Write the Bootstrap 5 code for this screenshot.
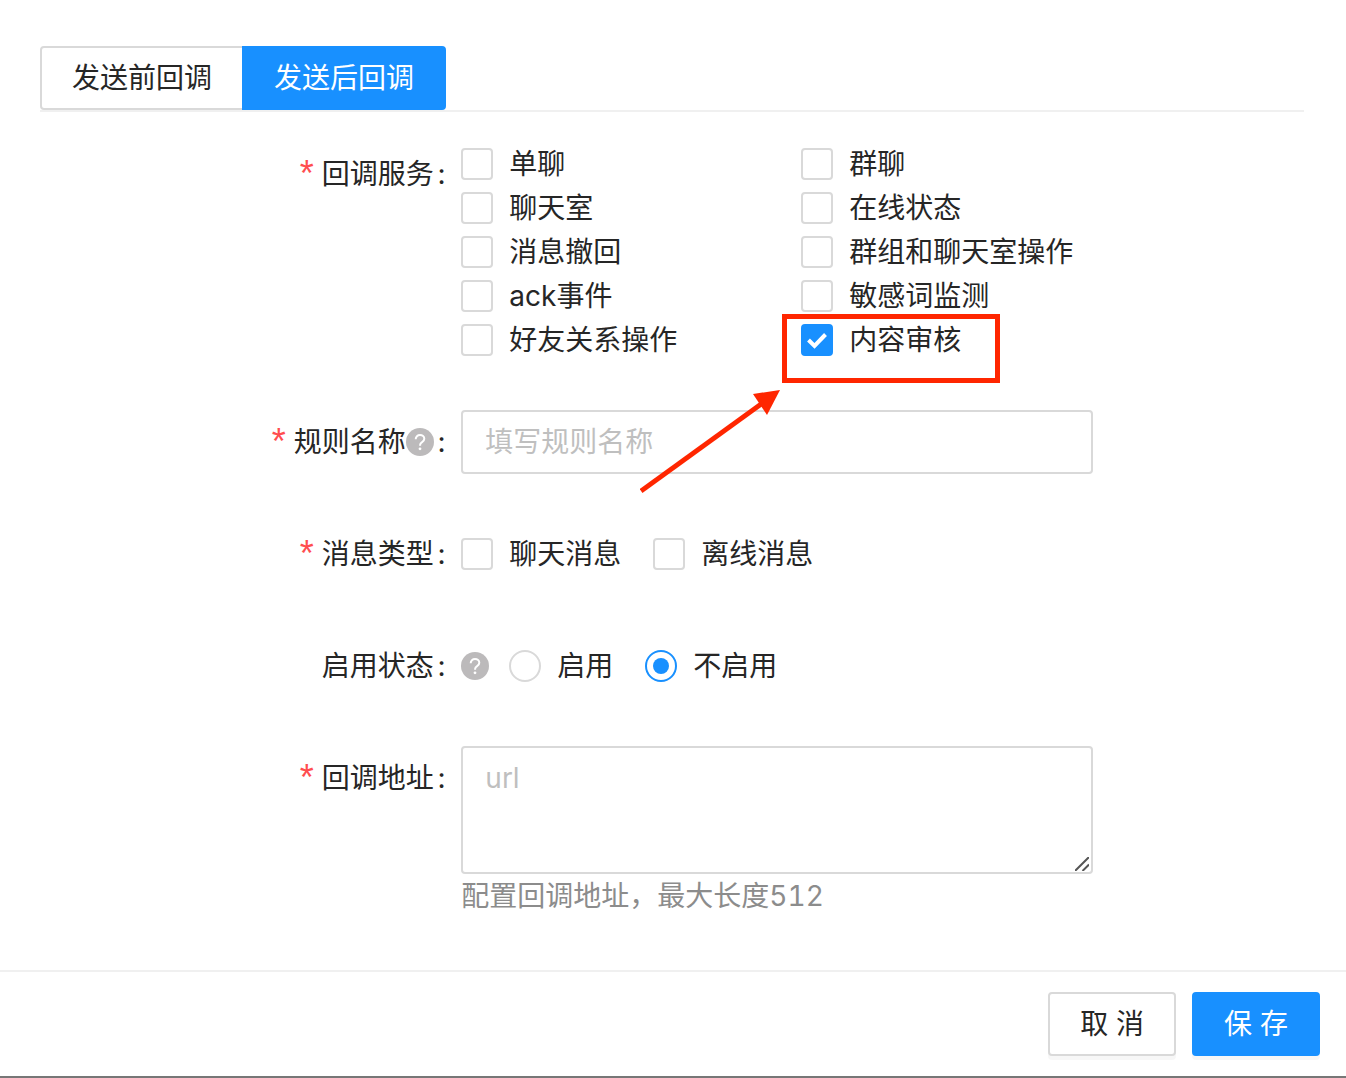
<!DOCTYPE html>
<html lang="zh-CN">
<head>
<meta charset="utf-8">
<meta name="viewport" content="width=device-width, initial-scale=1">
<title>回调配置</title>
<link href="https://cdn.jsdelivr.net/npm/bootstrap@5.3.0/dist/css/bootstrap.min.css" rel="stylesheet">
<style>
  :root { --line: #d9d9d9; --ink: #262626; --brand: #1890ff; }
  body {
    font-family: Inter, "Noto Sans CJK SC", sans-serif;
    font-size: 28px; line-height: 44px; color: var(--ink); background: #fff;
    font-variant-numeric: tabular-nums;
  }
  .dialog-main { padding: 46px 42px 52px 40px; }
  .ui-btn {
    --bs-btn-font-size: 28px; --bs-btn-line-height: 44px;
    --bs-btn-padding-x: 30px; --bs-btn-padding-y: 8px;
    --bs-btn-border-width: 2px; --bs-btn-border-radius: 4px;
    --bs-btn-color: var(--ink); --bs-btn-bg: #fff; --bs-btn-border-color: var(--line);
    --bs-btn-hover-color: var(--brand); --bs-btn-hover-bg: #fff; --bs-btn-hover-border-color: var(--brand);
  }
  .ui-btn-main {
    --bs-btn-color: #fff; --bs-btn-bg: var(--brand); --bs-btn-border-color: var(--brand);
    --bs-btn-hover-color: #fff; --bs-btn-hover-bg: #40a9ff; --bs-btn-hover-border-color: #40a9ff;
  }
  .tab-strip { border-bottom: 2px solid #f0f0f0; margin-bottom: 30px; }
  .tab-strip .ui-btn + .ui-btn { margin-left: -2px; }
  .field + .field { margin-top: 48px; }
  .field-label { padding: 10px 0; }
  .field-label .star {
    color: #ff4d4f; width: 14px; margin-right: 8px; text-align: center;
    font-family: "Liberation Sans", sans-serif; font-size: 36px;
  }
  .field-label .colon { margin: 0 16px 0 4px; }
  .help { width: 28px; height: 28px; flex: none; }
  .options { display: grid; grid-template-columns: 340px 1fr; }
  .field-line { min-height: 64px; }
  .form-check-input {
    width: 32px; height: 32px; margin: 0; flex: none;
    border: 2px solid var(--line); background-color: #fff;
  }
  .form-check-input[type=checkbox] { border-radius: 4px; }
  .form-check-input:checked { border-color: var(--brand); }
  .form-check-input:checked[type=checkbox] {
    background-color: var(--brand); background-origin: border-box; background-size: 32px 32px;
    background-image: url("data:image/svg+xml,%3Csvg xmlns='http://www.w3.org/2000/svg' viewBox='0 0 32 32'%3E%3Cpath d='M7.5 16l6 6L24.5 10.500' fill='none' stroke='%23fff' stroke-width='4'/%3E%3C/svg%3E");
  }
  .form-check-input:checked[type=radio] {
    background-color: #fff; background-origin: border-box; background-size: 32px 32px;
    background-image: url("data:image/svg+xml,%3Csvg xmlns='http://www.w3.org/2000/svg' viewBox='0 0 32 32'%3E%3Ccircle cx='16' cy='16' r='8' fill='%231890ff'/%3E%3C/svg%3E");
  }
  .form-control {
    font-size: 28px; line-height: 44px; padding: 8px 22px; color: var(--ink);
    border: 2px solid var(--line); border-radius: 4px;
  }
  .form-control::placeholder { color: #bfbfbf; }
  textarea.form-control { height: 128px; display: block; }
  textarea.form-control::-webkit-resizer { display: none; }
  .grip { right: 4px; bottom: 3px; width: 14px; height: 14px; pointer-events: none; }
  .hint { color: #8c8c8c; }
  .callout-mark { left: -161px; top: -4px; width: 360px; height: 180px; pointer-events: none; z-index: 2; }
  .dialog-foot { border-top: 2px solid #f0f0f0; border-bottom: 2px solid #777; padding: 20px 26px 20px 0; }
  .dialog-foot .ui-btn { box-shadow: 0 4px 0 rgba(0, 0, 0, .03); }
</style>
</head>
<body>
<svg class="d-none" aria-hidden="true">
  <symbol id="icon-help" viewBox="0 0 28 28">
    <circle cx="14" cy="14" r="14" fill="#bcbabb"/>
    <path d="M9.700 11.200c0-2.500 1.900-4.100 4.300-4.100s4.300 1.500 4.300 3.700c0 1.600-.9 2.500-2.200 3.300-1.400.9-2 1.500-2 3v.6" fill="none" stroke="#fff" stroke-width="2"/>
    <circle cx="14" cy="20.800" r="1.400" fill="#fff"/>
  </symbol>
</svg>

<main class="dialog-main">
  <div class="tab-strip d-flex">
    <button type="button" class="btn ui-btn rounded-end-0">发送前回调</button>
    <button type="button" class="btn ui-btn ui-btn-main rounded-start-0">发送后回调</button>
  </div>

  <form id="callback-form">
    <div class="field row g-0" role="group" aria-labelledby="lb-service">
      <div class="col-4 field-label d-flex justify-content-end" id="lb-service"><span class="star">*</span>回调服务<span class="colon">:</span></div>
      <div class="col-6 options">
        <label class="d-flex align-items-center gap-3"><input class="form-check-input" type="checkbox">单聊</label>
        <label class="d-flex align-items-center gap-3"><input class="form-check-input" type="checkbox">群聊</label>
        <label class="d-flex align-items-center gap-3"><input class="form-check-input" type="checkbox">聊天室</label>
        <label class="d-flex align-items-center gap-3"><input class="form-check-input" type="checkbox">在线状态</label>
        <label class="d-flex align-items-center gap-3"><input class="form-check-input" type="checkbox">消息撤回</label>
        <label class="d-flex align-items-center gap-3"><input class="form-check-input" type="checkbox">群组和聊天室操作</label>
        <label class="d-flex align-items-center gap-3"><input class="form-check-input" type="checkbox">ack事件</label>
        <label class="d-flex align-items-center gap-3"><input class="form-check-input" type="checkbox">敏感词监测</label>
        <label class="d-flex align-items-center gap-3"><input class="form-check-input" type="checkbox">好友关系操作</label>
        <div class="position-relative">
          <label class="d-flex align-items-center gap-3"><input class="form-check-input" type="checkbox" checked>内容审核</label>
          <svg class="callout-mark position-absolute" viewBox="0 0 360 180" aria-hidden="true">
            <rect x="144.500" y="2.500" width="213" height="64" fill="none" stroke="#ff2600" stroke-width="5"/>
            <path d="M1 177L124 88" stroke="#ff2600" stroke-width="5"/>
            <path d="M140 76L113 80L127 101Z" fill="#ff2600"/>
          </svg>
        </div>
      </div>
    </div>

    <div class="field row g-0">
      <label class="col-4 field-label d-flex justify-content-end align-items-center" for="rule-name"><span class="star">*</span>规则名称<svg class="help" aria-hidden="true"><use href="#icon-help"/></svg><span class="colon">:</span></label>
      <div class="col-6"><input type="text" class="form-control" id="rule-name" placeholder="填写规则名称"></div>
    </div>

    <div class="field row g-0" role="group" aria-labelledby="lb-type">
      <div class="col-4 field-label d-flex justify-content-end" id="lb-type"><span class="star">*</span>消息类型<span class="colon">:</span></div>
      <div class="col-6 field-line d-flex align-items-center">
        <label class="d-flex align-items-center gap-3 me-3 pe-3"><input class="form-check-input" type="checkbox">聊天消息</label>
        <label class="d-flex align-items-center gap-3"><input class="form-check-input" type="checkbox">离线消息</label>
      </div>
    </div>

    <div class="field row g-0" role="radiogroup" aria-labelledby="lb-state">
      <div class="col-4 field-label d-flex justify-content-end" id="lb-state">启用状态<span class="colon">:</span></div>
      <div class="col-6 field-line d-flex align-items-center">
        <svg class="help me-3" aria-hidden="true"><use href="#icon-help"/></svg>
        <label class="d-flex align-items-center gap-3 ms-1 me-3 pe-3"><input class="form-check-input" type="radio" name="state">启用</label>
        <label class="d-flex align-items-center gap-3"><input class="form-check-input" type="radio" name="state" checked>不启用</label>
      </div>
    </div>

    <div class="field row g-0">
      <label class="col-4 field-label d-flex justify-content-end align-self-start" for="callback-url"><span class="star">*</span>回调地址<span class="colon">:</span></label>
      <div class="col-6">
        <div class="position-relative">
          <textarea class="form-control" id="callback-url" placeholder="url" aria-describedby="url-hint"></textarea>
          <svg class="grip position-absolute" viewBox="0 0 14 14" aria-hidden="true"><path d="M0 14L14 0M7.500 14L14 7.500" stroke="#555" stroke-width="2"/></svg>
        </div>
        <div class="hint" id="url-hint">配置回调地址，最大长度512</div>
      </div>
    </div>
  </form>
</main>

<footer class="dialog-foot d-flex justify-content-end gap-3">
  <button type="button" class="btn ui-btn">取 消</button>
  <button type="submit" form="callback-form" class="btn ui-btn ui-btn-main">保 存</button>
</footer>
<script src="https://cdn.jsdelivr.net/npm/bootstrap@5.3.0/dist/js/bootstrap.bundle.min.js"></script>
</body>
</html>
